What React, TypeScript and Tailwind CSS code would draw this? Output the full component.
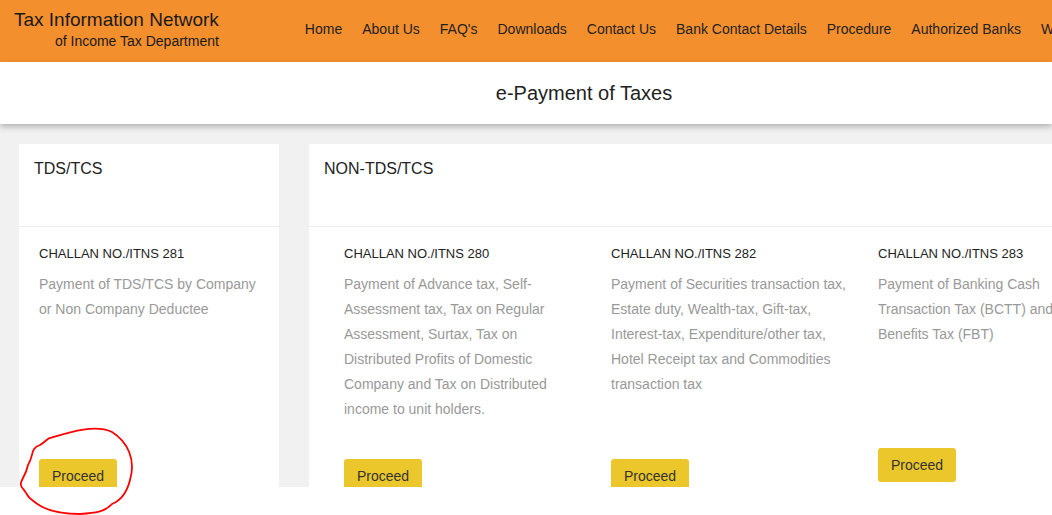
import React from 'react';

const navItems = ['Home', 'About Us', "FAQ's", 'Downloads', 'Contact Us', 'Bank Contact Details', 'Procedure', 'Authorized Banks', "What's New"];

type Challan = { no: string; text: string; descH: string; w: string };

const nonTds: Challan[] = [
  {
    no: 'CHALLAN NO./ITNS 280',
    text: 'Payment of Advance tax, Self-Assessment tax, Tax on Regular Assessment, Surtax, Tax on Distributed Profits of Domestic Company and Tax on Distributed income to unit holders.',
    descH: 'h-[175px]',
    w: 'w-[267px]',
  },
  {
    no: 'CHALLAN NO./ITNS 282',
    text: 'Payment of Securities transaction tax, Estate duty, Wealth-tax, Gift-tax, Interest-tax, Expenditure/other tax, Hotel Receipt tax and Commodities transaction tax',
    descH: 'h-[175px]',
    w: 'w-[267px]',
  },
  {
    no: 'CHALLAN NO./ITNS 283',
    text: 'Payment of Banking Cash Transaction Tax (BCTT) and Fringe Benefits Tax (FBT)',
    descH: 'h-[164px]',
    w: 'w-[267px]',
  },
];

function ChallanCol({ c }: { c: Challan }) {
  return (
    <div className={`${c.w} shrink-0 px-[15px]`}>
      <div className="text-[13px] leading-[20px] text-[#222]">{c.no}</div>
      <p className={`mt-[8px] ${c.descH} overflow-hidden text-[14px] leading-[25px] text-[#999]`}>{c.text}</p>
      <button className="mt-[12px] w-[78px] h-[34px] rounded-[3px] bg-[#EBC72B] text-[14px] text-[#333]">Proceed</button>
    </div>
  );
}

export default function App() {
  return (
    <div className="relative w-[1052px] h-[515px] overflow-hidden bg-white font-['Liberation_Sans',Arial,sans-serif]">
      {/* Header */}
      <header className="h-[62px] bg-[#F48F2E] flex items-start whitespace-nowrap">
        <div className="shrink-0 pl-[14px] pt-[9px] flex flex-col items-end">
          <div className="text-[19px] leading-[22px] text-[#1a1a1a]">Tax Information Network</div>
          <div className="text-[14px] leading-[20px] text-[#1a1a1a]">of Income Tax Department</div>
        </div>
        <nav className="ml-[86px] h-full pb-[4px] flex items-center gap-[20px] text-[14px] text-[#222]">
          {navItems.map((n) => (
            <span key={n}>{n}</span>
          ))}
        </nav>
      </header>

      {/* Title band */}
      <div className="relative z-10 h-[62px] bg-white shadow-[0_3px_6px_rgba(0,0,0,0.25)] flex items-center justify-center">
        <h1 className="text-[20px] text-[#222] ml-[116px]">e-Payment of Taxes</h1>
      </div>

      {/* Content */}
      <main className="h-[363px] bg-[#F1F1F1] overflow-hidden flex gap-[30px] pl-[19px] pt-[20px]">
        <section className="w-[260px] shrink-0 bg-white">
          <div className="h-[83px] border-b border-[#EEEEEE] pl-[15px] pt-[13px] text-[16px] text-[#222]">TDS/TCS</div>
          <div className="pl-[5px] pt-[17px]">
            <ChallanCol
              c={{
                no: 'CHALLAN NO./ITNS 281',
                text: 'Payment of TDS/TCS by Company or Non Company Deductee',
                descH: 'h-[175px]',
                w: 'w-[250px]',
              }}
            />
          </div>
        </section>

        <section className="w-[900px] shrink-0 bg-white">
          <div className="h-[83px] border-b border-[#EEEEEE] pl-[15px] pt-[13px] text-[16px] text-[#222]">NON-TDS/TCS</div>
          <div className="pl-[20px] pt-[17px] flex">
            {nonTds.map((c) => (
              <ChallanCol key={c.no} c={c} />
            ))}
          </div>
        </section>
      </main>

      {/* Red annotation circle */}
      <svg className="absolute left-0 top-[420px] pointer-events-none" width="150" height="95" viewBox="0 0 150 95">
        <path
          d="M50 18 C70 12 95 4 112 12 C128 22 136 40 130 60 C127 72 122 80 112 84 C105 92 95 93 80 94 C60 94 45 90 36 83 C26 76 30 78 24 70 C16 62 25 60 28 45 C34 36 30 28 40 25 C45 22 48 18 50 18 Z"
          fill="none"
          stroke="#F00"
          strokeWidth="1.8"
        />
      </svg>
    </div>
  );
}
